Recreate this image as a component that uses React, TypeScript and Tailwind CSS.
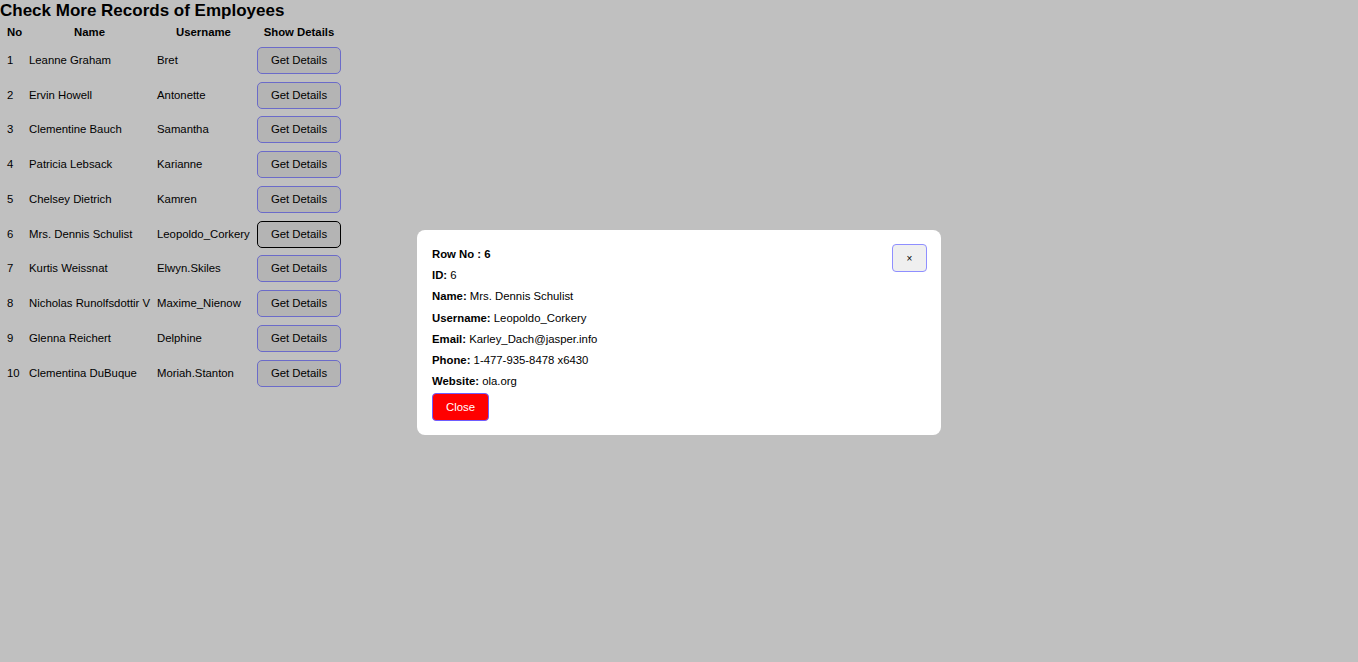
import React from "react";

const rows = [
  [1, "Leanne Graham", "Bret"],
  [2, "Ervin Howell", "Antonette"],
  [3, "Clementine Bauch", "Samantha"],
  [4, "Patricia Lebsack", "Karianne"],
  [5, "Chelsey Dietrich", "Kamren"],
  [6, "Mrs. Dennis Schulist", "Leopoldo_Corkery"],
  [7, "Kurtis Weissnat", "Elwyn.Skiles"],
  [8, "Nicholas Runolfsdottir V", "Maxime_Nienow"],
  [9, "Glenna Reichert", "Delphine"],
  [10, "Clementina DuBuque", "Moriah.Stanton"],
] as const;

export default function App() {
  return (
    <div
      className="relative w-[1358px] h-[662px] bg-[#c0c0c0] text-black overflow-hidden"
      style={{ fontFamily: '"Liberation Sans", Arial, sans-serif' }}
    >
      <h3 className="m-0 text-[17px] font-bold leading-[22px]">Check More Records of Employees</h3>
      <div className="pl-[7px] pt-[2px] text-[11.35px]">
        <div className="grid grid-cols-[15px_121px_93px_84px] gap-x-[7px]">
          <div className="h-[18px] flex items-center justify-center font-bold whitespace-nowrap">No</div>
          <div className="h-[18px] flex items-center justify-center font-bold">Name</div>
          <div className="h-[18px] flex items-center justify-center font-bold">Username</div>
          <div className="h-[18px] flex items-center justify-center font-bold whitespace-nowrap">Show Details</div>
        </div>
        <div className="flex flex-col mt-[1px]">
          {rows.map(([no, name, user]) => (
            <div
              key={no}
              className="grid grid-cols-[15px_121px_93px_84px] gap-x-[7px] h-[34.78px] items-center"
            >
              <div className="whitespace-nowrap">{no}</div>
              <div className="whitespace-nowrap">{name}</div>
              <div className="whitespace-nowrap">{user}</div>
              <button
                className={
                  "h-[27px] w-[84px] rounded-[5px] bg-[#b4b4b4] text-[11.35px] text-black " +
                  (no === 6
                    ? "border-[1.5px] border-black"
                    : "border border-[#6b6bc9]")
                }
              >
                Get Details
              </button>
            </div>
          ))}
        </div>
      </div>

      <div className="absolute left-[417px] top-[230px] w-[524px] h-[205px] bg-white rounded-[8px] px-[15px] pt-[14px] pb-[14px] text-[11.35px]">
        <button className="absolute right-[14px] top-[14px] w-[35px] h-[28px] rounded-[4px] bg-[#efefef] border border-[#8f8fff] text-[10px] flex items-center justify-center">
          ×
        </button>
        <div className="leading-[21.17px]">
          <div className="font-bold">Row No : 6</div>
          <div><b>ID:</b> 6</div>
          <div><b>Name:</b> Mrs. Dennis Schulist</div>
          <div><b>Username:</b> Leopoldo_Corkery</div>
          <div><b>Email:</b> Karley_Dach@jasper.info</div>
          <div><b>Phone:</b> 1-477-935-8478 x6430</div>
          <div><b>Website:</b> ola.org</div>
        </div>
        <button className="mt-[1px] w-[57px] h-[28px] rounded-[4px] bg-[#ff0000] border border-[#6e5cff] text-white text-[11.35px]">
          Close
        </button>
      </div>
    </div>
  );
}
